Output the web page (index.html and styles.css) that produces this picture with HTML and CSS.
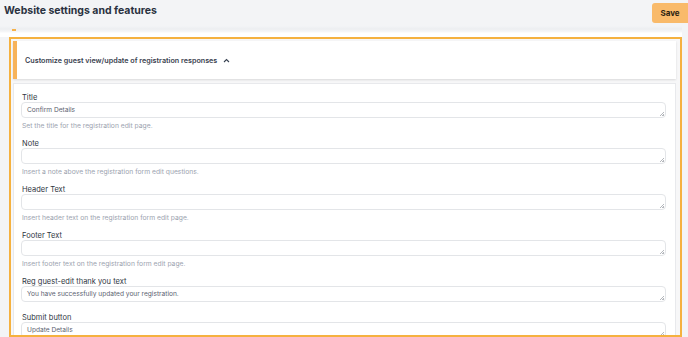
FILE: index.html
```html
<!DOCTYPE html>
<html>
<head>
<meta charset="utf-8">
<link rel="stylesheet" href="styles.css">
</head>
<body>
<div class="topbar">
  <h1 class="page-title">Website settings and features</h1>
  <button class="save-btn">Save</button>
</div>
<div class="strip"><span class="tick"></span></div>
<div class="panel">
  <div class="card-header">
    <span class="card-title">Customize guest view/update of registration responses</span>
    <svg class="caret" width="7" height="5" viewBox="0 0 7 5"><path d="M1 4 L3.5 1.5 L6 4" fill="none" stroke="#374151" stroke-width="1.1"/></svg>
  </div>
  <div class="card-body">
    <div class="field">
      <label class="label">Title</label>
      <div class="input-wrap"><textarea class="input" rows="1">Confirm Details</textarea></div>
      <p class="help">Set the title for the registration edit page.</p>
    </div>
    <div class="field">
      <label class="label">Note</label>
      <div class="input-wrap"><textarea class="input" rows="1"></textarea></div>
      <p class="help">Insert a note above the registration form edit questions.</p>
    </div>
    <div class="field">
      <label class="label">Header Text</label>
      <div class="input-wrap"><textarea class="input" rows="1"></textarea></div>
      <p class="help">Insert header text on the registration form edit page.</p>
    </div>
    <div class="field">
      <label class="label">Footer Text</label>
      <div class="input-wrap"><textarea class="input" rows="1"></textarea></div>
      <p class="help">Insert footer text on the registration form edit page.</p>
    </div>
    <div class="field field-plain">
      <label class="label">Reg guest-edit thank you text</label>
      <div class="input-wrap"><textarea class="input" rows="1">You have successfully updated your registration.</textarea></div>
    </div>
    <div class="field field-plain">
      <label class="label">Submit button</label>
      <div class="input-wrap"><textarea class="input" rows="1">Update Details</textarea></div>
    </div>
  </div>
</div>
</body>
</html>
```

FILE: styles.css
```css
* { box-sizing: border-box; }
html, body { margin: 0; padding: 0; }
body {
  background: #f3f4f6;
  font-family: Inter, "Noto Sans", sans-serif;
  color: #374151;
  width: 688px;
  height: 337px;
  overflow: hidden;
}
.topbar {
  display: flex;
  justify-content: space-between;
  align-items: flex-start;
  height: 26px;
  padding-left: 4px;
}
.page-title {
  margin: 4px 0 0;
  font-size: 10.5px;
  line-height: 14px;
  font-weight: 700;
  color: #2a3140;
}
.save-btn {
  margin-top: 3px;
  width: 36px;
  height: 20px;
  border: none;
  border-radius: 3px 0 0 3px;
  background: #f9ba6a;
  color: #2d2412;
  font-family: Inter, "Noto Sans", sans-serif;
  font-size: 8px;
  font-weight: 700;
  padding: 0;
}
.strip {
  height: 11px;
  background: linear-gradient(#f3f4f6 0, #eceef1 3px, #f7f7f8 6px, #ffffff 7px);
  margin-right: 6px;
  position: relative;
}
.tick {
  position: absolute;
  left: 12px;
  top: 3px;
  width: 4px;
  height: 2px;
  background: #f6b14a;
}
.panel {
  margin: 0 6px 0 9px;
  border: 2px solid #f5b13f;
  background: #f7f7f8;
  padding: 2px 2px 0 2px;
  height: 300px;
  overflow: hidden;
}
.card-header {
  display: flex;
  align-items: center;
  height: 38px;
  background: #fff;
  border-left: 4px solid #f7b35a;
  padding-left: 8px;
  padding-top: 1px;
  box-shadow: 0 1px 2px rgba(0,0,0,0.12);
  margin-right: 2px;
}
.card-title {
  font-size: 7.2px;
  font-weight: 600;
  color: #3b4250;
}
.caret { margin-left: 6px; }
.card-body {
  margin-top: 4px;
  margin-right: 2px;
  background: #fff;
  border: 1px solid #e8e9ec;
  border-bottom: none;
  padding: 10px 9px 0 7px;
  height: 270px;
}
.field { margin-bottom: 10px; }
.field-plain { margin-bottom: 12px; }
.label {
  display: block;
  font-size: 7.5px;
  line-height: 8px;
  color: #2f3642;
  padding-left: 1px;
}
.input-wrap {
  position: relative;
}
.input-wrap::after {
  content: "";
  position: absolute;
  right: 2px;
  bottom: 2px;
  width: 4px;
  height: 4px;
  background: linear-gradient(135deg, transparent 0 45%, #b5b8bd 45% 60%, transparent 60% 72%, #b5b8bd 72% 90%, transparent 90%);
}
.input {
  display: block;
  width: 100%;
  height: 16px;
  margin: 0;
  padding: 2px 5px;
  border: 1px solid #e3e5e8;
  border-radius: 4px;
  font-family: Inter, "Noto Sans", sans-serif;
  font-size: 6.6px;
  line-height: 10px;
  color: #5b6270;
  background: #fff;
  overflow: hidden;
  resize: none;
}
.help {
  margin: 3px 0 0 1px;
  font-size: 6.75px;
  line-height: 9px;
  color: #9ca3af;
}
```
